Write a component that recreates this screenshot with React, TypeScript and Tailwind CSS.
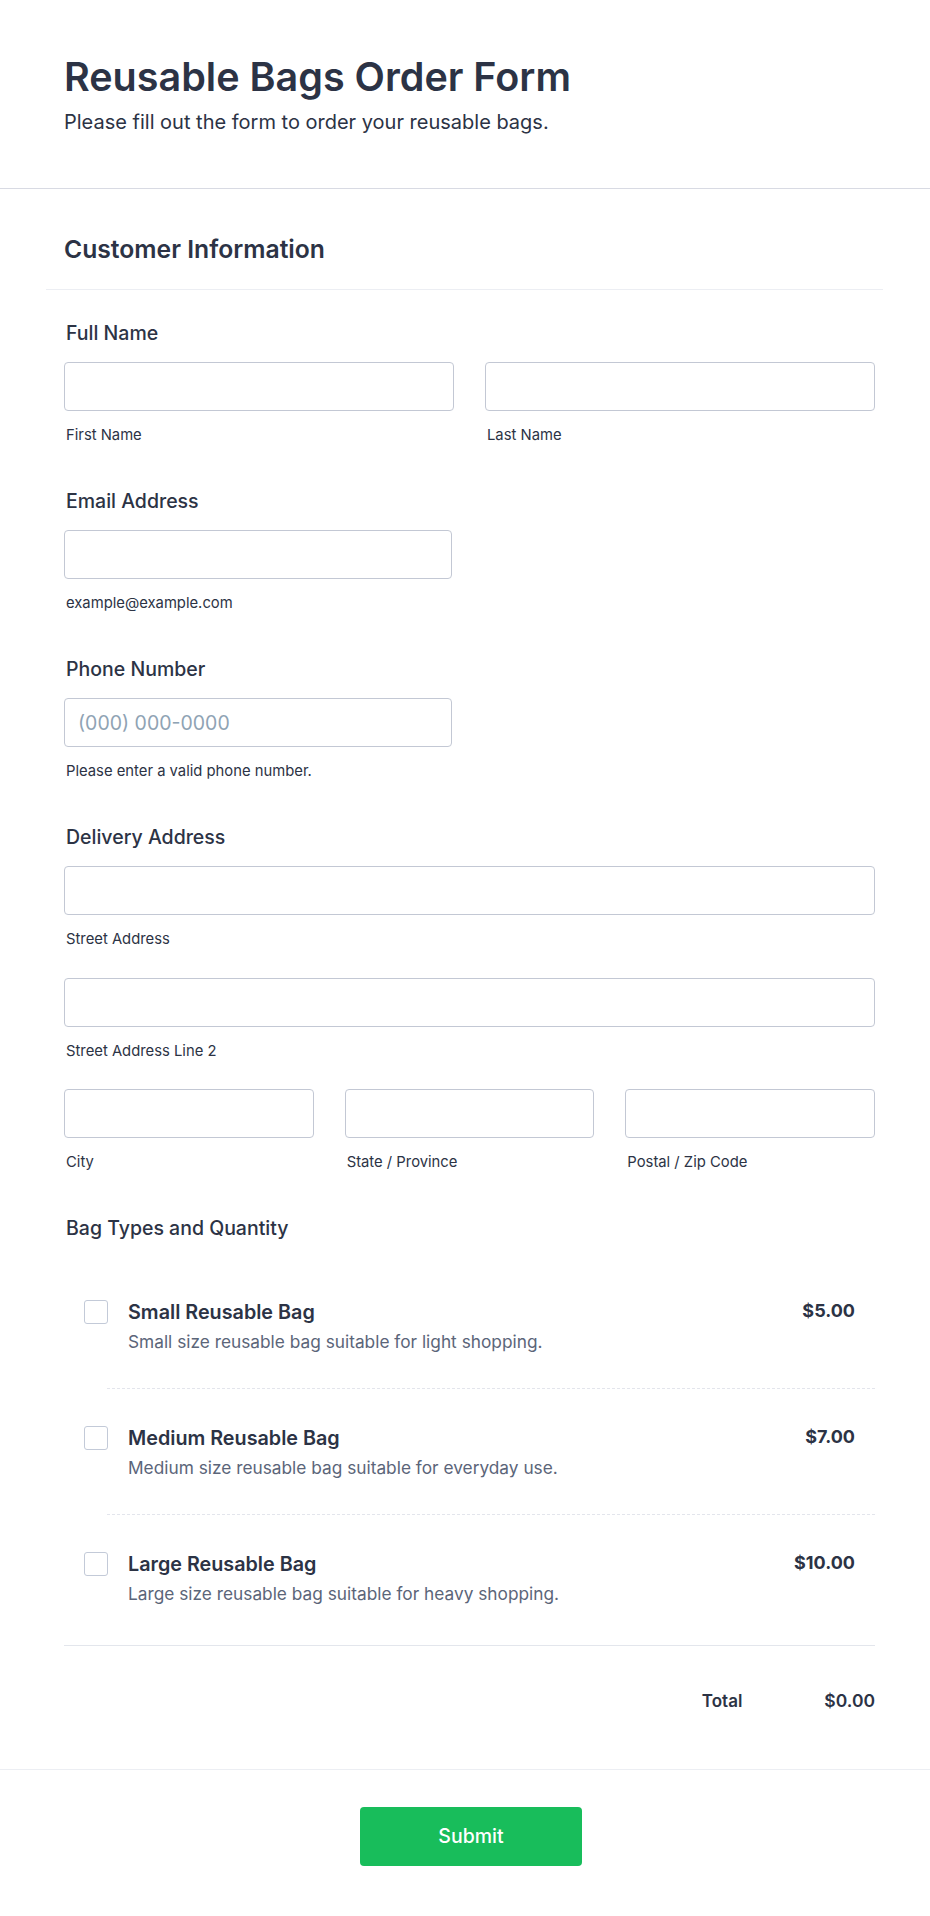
import { useState } from "react";

type Bag = {
  id: string;
  name: string;
  description: string;
  price: number;
};

const bags: Bag[] = [
  {
    id: "small",
    name: "Small Reusable Bag",
    description: "Small size reusable bag suitable for light shopping.",
    price: 5,
  },
  {
    id: "medium",
    name: "Medium Reusable Bag",
    description: "Medium size reusable bag suitable for everyday use.",
    price: 7,
  },
  {
    id: "large",
    name: "Large Reusable Bag",
    description: "Large size reusable bag suitable for heavy shopping.",
    price: 10,
  },
];

const labelCls =
  "block pl-[2px] text-[19.5px] leading-[26px] font-medium text-[#2c3345]";
const subLabelCls =
  "mt-[14px] block pl-[2px] text-[14.8px] leading-[20px] text-[#2c3345]";
const inputCls =
  "block h-[49px] w-full rounded-[4px] border border-[#c3c8d4] bg-white px-[13px] text-[19.5px] text-[#2c3345] placeholder:text-[#8fa3b4] outline-none";

const TextField = ({
  sub,
  placeholder,
}: {
  sub?: string;
  placeholder?: string;
}) => (
  <div>
    <input className={inputCls} placeholder={placeholder} />
    {sub && <span className={subLabelCls}>{sub}</span>}
  </div>
);

const App = () => {
  const [picked, setPicked] = useState<Record<string, boolean>>({});

  const total = bags.reduce((sum, b) => (picked[b.id] ? sum + b.price : sum), 0);

  return (
    <div className="min-h-[1916px] bg-white font-['Inter','Noto_Sans',sans-serif] text-[#2c3345]">
      {/* Header */}
      <div className="border-b border-[#d8dae3] px-[64px] pt-[53px] pb-[52px]">
        <h1 className="text-[39.5px] leading-[48px] font-semibold text-[#2c3345]">
          Reusable Bags Order Form
        </h1>
        <p className="mt-[7px] text-[20px] leading-[28px] text-[#2c3345]">
          Please fill out the form to order your reusable bags.
        </p>
      </div>

      {/* Section heading */}
      <div className="mx-[46px] w-[837px] border-b border-[#eceef3] pl-[18px] pt-[44px] pb-[24px]">
        <h2 className="text-[24.7px] leading-[32px] font-semibold text-[#2c3345]">
          Customer Information
        </h2>
      </div>

      <div className="ml-[64px] w-[811px] pt-[30px]">
        {/* Full name */}
        <div>
          <label className={labelCls}>Full Name</label>
          <div className="mt-[16px] grid grid-cols-2 gap-[31px]">
            <TextField sub="First Name" />
            <TextField sub="Last Name" />
          </div>
        </div>

        {/* Email */}
        <div className="mt-[43px]">
          <label className={labelCls}>Email Address</label>
          <div className="mt-[16px] w-[388px]">
            <TextField sub="example@example.com" />
          </div>
        </div>

        {/* Phone */}
        <div className="mt-[43px]">
          <label className={labelCls}>Phone Number</label>
          <div className="mt-[16px] w-[388px]">
            <TextField
              placeholder="(000) 000-0000"
              sub="Please enter a valid phone number."
            />
          </div>
        </div>

        {/* Address */}
        <div className="mt-[43px]">
          <label className={labelCls}>Delivery Address</label>
          <div className="mt-[16px]">
            <TextField sub="Street Address" />
          </div>
          <div className="mt-[29px]">
            <TextField sub="Street Address Line 2" />
          </div>
          <div className="mt-[28px] grid grid-cols-3 gap-[31px]">
            <TextField sub="City" />
            <TextField sub="State / Province" />
            <TextField sub="Postal / Zip Code" />
          </div>
        </div>

        {/* Products */}
        <div className="mt-[43px]">
          <label className={labelCls}>Bag Types and Quantity</label>
          <div className="mt-[22px]">
            {bags.map((bag, i) => (
              <div key={bag.id}>
                {i > 0 && (
                  <div className="ml-[43px] border-t border-dashed border-[#e3e5ec]" />
                )}
                <div
                  className={`flex items-start px-[20px] pt-[36px] ${
                    i === bags.length - 1 ? "pb-[39px]" : "pb-[34px]"
                  }`}
                >
                  <input
                    type="checkbox"
                    checked={!!picked[bag.id]}
                    onChange={() =>
                      setPicked((p) => ({ ...p, [bag.id]: !p[bag.id] }))
                    }
                    className="mt-[1px] h-[24px] w-[24px] shrink-0 cursor-pointer appearance-none rounded-[3px] border border-[#c3cad8] bg-white checked:border-[#18bd5b] checked:bg-[#18bd5b]"
                  />
                  <div className="ml-[20px] flex-1">
                    <div className="text-[19.75px] leading-[26px] font-semibold text-[#2c3345]">
                      {bag.name}
                    </div>
                    <div className="mt-[5px] text-[17.3px] leading-[24px] text-[#5b6579]">
                      {bag.description}
                    </div>
                  </div>
                  <div className="text-[18px] leading-[24px] font-bold text-[#2c3345]">
                    ${bag.price.toFixed(2)}
                  </div>
                </div>
              </div>
            ))}
          </div>
          <div className="border-t border-[#e3e6ec]" />
          <div className="flex items-baseline justify-end gap-[82px] pt-[43px] pb-[56px]">
            <span className="text-[17px] leading-[24px] font-semibold text-[#2c3345]">
              Total
            </span>
            <span className="text-[17.5px] leading-[24px] font-semibold text-[#2c3345]">
              ${total.toFixed(2)}
            </span>
          </div>
        </div>
      </div>

      {/* Footer */}
      <div className="flex justify-center border-t border-[#eceef3] pt-[37px] pb-[50px] pl-[12px]">
        <button
          type="button"
          className="h-[59px] w-[222px] rounded-[4px] bg-[#18bd5b] text-[19.5px] font-medium text-white"
        >
          Submit
        </button>
      </div>
    </div>
  );
};

export default App;
